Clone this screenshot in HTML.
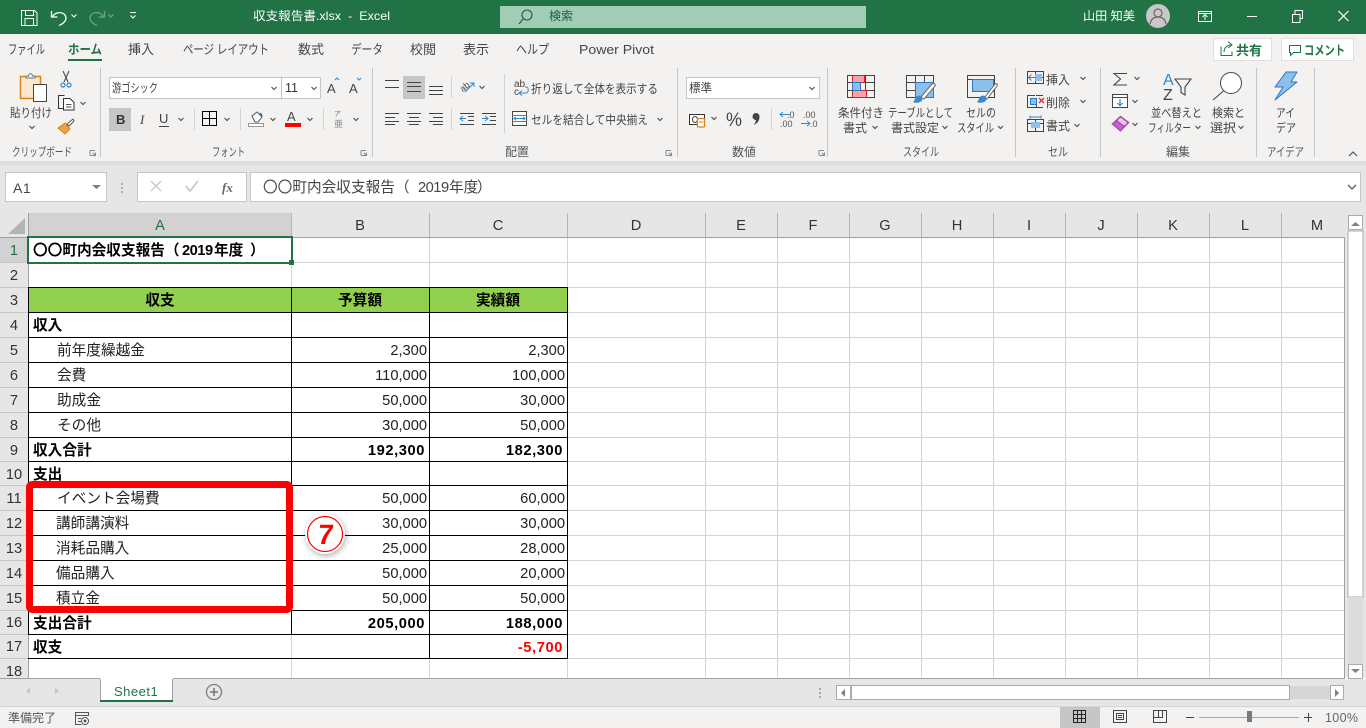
<!DOCTYPE html>
<html lang="ja"><head><meta charset="utf-8"><title>収支報告書.xlsx - Excel</title>
<style>
html,body{margin:0;padding:0;width:1366px;height:728px;overflow:hidden;background:#fff}
svg{display:block;position:absolute;left:0;top:0}
text{font-family:"Liberation Sans","Noto Sans CJK JP",sans-serif;white-space:pre;text-spacing-trim:space-all}
.w{font-size:12px;fill:#fff}
.r{font-size:12px;fill:#444}
.g{font-size:12px;fill:#555}
.c{font-size:14.67px;fill:#222}
.b{font-size:14.67px;font-weight:700;fill:#000}
.n{font-size:14.67px;fill:#222;text-anchor:end}
.nb{font-size:14.67px;font-weight:700;fill:#000;text-anchor:end;letter-spacing:.6px}
.h{font-size:14.67px;fill:#333;text-anchor:middle}
.ch{fill:none;stroke:#555;stroke-width:1.2}
.ln{fill:none;stroke:#444;stroke-width:1}
.crisp{shape-rendering:crispEdges}
</style></head><body>
<svg width="1366" height="728" viewBox="0 0 1366 728" xmlns="http://www.w3.org/2000/svg">
<!-- backgrounds -->
<g class="crisp">
<rect width="1366" height="728" fill="#fff"/>
<rect width="1366" height="34" fill="#217346"/>
<rect x="500" y="6" width="366" height="22" fill="#a0cdb4"/>
<rect y="34" width="1366" height="127" fill="#f3f2f1"/>
<rect y="161" width="1366" height="52" fill="#e6e6e6"/>
<rect y="161" width="1366" height="4" fill="#dcdcdc"/>
<rect x="5.5" y="172.5" width="101" height="29" fill="#fff" stroke="#c6c6c6"/>
<rect x="137.5" y="172.5" width="109" height="29" fill="#fff" stroke="#c6c6c6"/>
<rect x="250.5" y="172.5" width="1110" height="29" fill="#fff" stroke="#c6c6c6"/>
<!-- headers -->
<rect y="213" width="1344" height="24" fill="#e6e6e6"/>
<rect y="237" width="28" height="441" fill="#e6e6e6"/>
<rect x="29" y="213" width="262" height="24" fill="#d2d2d2"/>
<rect y="238" width="28" height="24" fill="#d2d2d2"/>
<rect x="1344" y="213" width="22" height="465" fill="#e6e6e6"/>
<!-- green header row -->
<rect x="28" y="287" width="539" height="25" fill="#92d050"/>
<!-- gridlines -->
<path fill="none" stroke="#d4d4d4" d="M291.5 237V287M429.5 237V287M567.5 237V678M705.5 237V678M777.5 237V678M849.5 237V678M921.5 237V678M993.5 237V678M1065.5 237V678M1137.5 237V678M1209.5 237V678M1281.5 237V678M291.5 634V678M429.5 658V678
M28 262.5H1344M28 287.5H1344M567 312.5H1344M567 337.5H1344M567 362.5H1344M567 387.5H1344M567 412.5H1344M567 437.5H1344M567 461.5H1344M567 485.5H1344M567 510.5H1344M567 535.5H1344M567 560.5H1344M567 585.5H1344M567 610.5H1344M567 634.5H1344M28 658.5H1344"/>
<!-- header separators -->
<path fill="none" stroke="#b4b4b4" d="M291.5 213V237M429.5 213V237M567.5 213V237M705.5 213V237M777.5 213V237M849.5 213V237M921.5 213V237M993.5 213V237M1065.5 213V237M1137.5 213V237M1209.5 213V237M1281.5 213V237"/>
<path fill="none" stroke="#c6c6c6" d="M0 262.5H28M0 287.5H28M0 312.5H28M0 337.5H28M0 362.5H28M0 387.5H28M0 412.5H28M0 437.5H28M0 461.5H28M0 485.5H28M0 510.5H28M0 535.5H28M0 560.5H28M0 585.5H28M0 610.5H28M0 634.5H28M0 658.5H28"/>
<path fill="none" stroke="#a0a0a0" d="M0 237.5H1344M28.5 213V678M1344.5 237V678"/>
<rect y="678" width="1345" height="1" fill="#a0a0a0"/>
<!-- table borders -->
<path fill="none" stroke="#000" d="M28.5 287V634M291.5 287V634M429.5 287V658M567.5 287V658
M28 287.5H568M28 312.5H568M28 337.5H568M28 362.5H568M28 387.5H568M28 412.5H568M28 437.5H568M28 461.5H568M28 485.5H568M28 510.5H568M28 535.5H568M28 560.5H568M28 585.5H568M28 610.5H568M28 634.5H568M28 658.5H568"/>
<path fill="none" stroke="#d4d4d4" d="M291.5 635V658"/>
<!-- selection -->
<rect x="28" y="237" width="264" height="26" fill="none" stroke="#217346" stroke-width="2"/>
<rect x="289" y="260" width="5" height="5" fill="#217346"/>
<!-- bottom bars -->
<rect y="679" width="1366" height="28" fill="#e6e6e6"/>
<rect y="706" width="1366" height="1" fill="#d4d4d4"/>
<rect y="707" width="1366" height="21" fill="#f3f2f1"/>
<path fill="#fff" d="M100 678h73v24h-73z"/>
<path fill="none" stroke="#a0a0a0" d="M100.5 679V702M172.5 679V702"/>
<rect x="100" y="700" width="73" height="2" fill="#217346"/>
<!-- scrollbars -->
<rect x="1348" y="231" width="15" height="366" fill="#fff" stroke="#ababab"/>
<rect x="1348" y="597" width="15" height="67" fill="#dcdcdc"/>
<rect x="1348.5" y="215.5" width="14" height="14" fill="#fff" stroke="#ababab"/>
<rect x="1348.5" y="664.5" width="14" height="14" fill="#fff" stroke="#ababab"/>
<rect x="836.5" y="685.5" width="14" height="14" fill="#fff" stroke="#ababab"/>
<rect x="851.5" y="685.5" width="438" height="14" fill="#fff" stroke="#ababab"/>
<rect x="1290" y="686" width="40" height="13" fill="#d6d6d6"/>
<rect x="1330.5" y="685.5" width="13" height="14" fill="#fff" stroke="#ababab"/>
<rect x="819" y="688" width="2" height="2" fill="#a8a8a8"/><rect x="819" y="692" width="2" height="2" fill="#a8a8a8"/><rect x="819" y="696" width="2" height="2" fill="#a8a8a8"/>
<rect x="121" y="183" width="2" height="2" fill="#b0b0b0"/><rect x="121" y="187" width="2" height="2" fill="#b0b0b0"/><rect x="121" y="191" width="2" height="2" fill="#b0b0b0"/>
<!-- status view -->
<rect x="1060" y="707" width="40" height="21" fill="#c6c6c6"/>
<path fill="none" stroke="#222" d="M1073.5 710.5h12v12h-12zM1077.5 710.5v12M1081.5 710.5v12M1073.5 714.5h12M1073.5 718.5h12"/>
<path fill="none" stroke="#444" d="M1113.5 710.5h13v12h-13zM1116.5 713.5h7v6h-7zM1118 715.5h4M1118 717.5h4"/>
<path fill="none" stroke="#444" d="M1153.5 710.5h13v12h-13zM1153.5 717.5h9v-7M1158.5 710.5v7"/>
<path fill="none" stroke="#444" d="M1186 717.5h8M1304 717.5h8M1308.5 713v9"/>
<rect x="1199" y="717" width="100" height="1" fill="#a8a8a8"/>
<rect x="1247" y="711" width="5" height="11" fill="#7a7a7a"/>
<!-- ribbon separators -->
<path fill="none" stroke="#c6c6c6" d="M100.5 68V157M372.5 68V157M677.5 68V157M827.5 68V157M1015.5 68V157M1100.5 68V157M1256.5 68V157M1314.5 68V157"/>
<path fill="none" stroke="#d2d2d2" d="M194.5 108V130M240.5 108V130M323.5 108V130M451.5 76V98M451.5 108V130M504.5 74V133M771.5 108V130"/>
<!-- input boxes -->
<rect x="109.5" y="77.5" width="172" height="21" fill="#fff" stroke="#c6c6c6"/>
<rect x="281.5" y="77.5" width="39" height="21" fill="#fff" stroke="#c6c6c6"/>
<rect x="686.5" y="77.5" width="133" height="21" fill="#fff" stroke="#c6c6c6"/>
<rect x="109" y="108" width="22" height="23" fill="#c6c6c6"/>
<rect x="403" y="76" width="22" height="23" fill="#c6c6c6"/>
<!-- buttons -->
<rect x="1213.5" y="38.5" width="58" height="22" fill="#fff" stroke="#e1dfdd"/>
<rect x="1281.5" y="38.5" width="72" height="22" fill="#fff" stroke="#e1dfdd"/>
<rect x="68" y="59" width="34" height="2" fill="#217346"/>
</g>
<!-- title bar text -->
<text x="253" y="20" class="w" textLength="137" lengthAdjust="spacingAndGlyphs">収支報告書.xlsx  -  Excel</text>
<text x="549" y="20" style="font-size:12px;fill:#1c5c3c">検索</text>
<text x="1083" y="20" class="w" textLength="52" lengthAdjust="spacingAndGlyphs">山田 知美</text>
<!-- tabs -->
<text x="8" y="54" class="r" style="font-size:13px" textLength="37" lengthAdjust="spacingAndGlyphs">ファイル</text>
<text x="68" y="54" class="r" style="font-weight:700;fill:#217346;font-size:13px" textLength="34" lengthAdjust="spacingAndGlyphs">ホーム</text>
<text x="128" y="54" class="r" style="font-size:13px" textLength="26" lengthAdjust="spacingAndGlyphs">挿入</text>
<text x="183" y="54" class="r" style="font-size:13px" textLength="86" lengthAdjust="spacingAndGlyphs">ページ レイアウト</text>
<text x="298" y="54" class="r" style="font-size:13px" textLength="26" lengthAdjust="spacingAndGlyphs">数式</text>
<text x="351" y="54" class="r" style="font-size:13px" textLength="32" lengthAdjust="spacingAndGlyphs">データ</text>
<text x="410" y="54" class="r" style="font-size:13px" textLength="26" lengthAdjust="spacingAndGlyphs">校閲</text>
<text x="463" y="54" class="r" style="font-size:13px" textLength="26" lengthAdjust="spacingAndGlyphs">表示</text>
<text x="516" y="54" class="r" style="font-size:13px" textLength="33" lengthAdjust="spacingAndGlyphs">ヘルプ</text>
<text x="579" y="54" class="r" style="font-size:13px" textLength="75" lengthAdjust="spacingAndGlyphs">Power Pivot</text>
<text x="1236" y="55" style="font-size:13px;font-weight:700;fill:#217346" textLength="26" lengthAdjust="spacingAndGlyphs">共有</text>
<text x="1304" y="55" style="font-size:13px;font-weight:700;fill:#217346" textLength="41" lengthAdjust="spacingAndGlyphs">コメント</text>
<!-- ribbon text -->
<text x="10" y="117" class="r" textLength="42" lengthAdjust="spacingAndGlyphs">貼り付け</text>
<text x="112" y="92" class="r" textLength="46" lengthAdjust="spacingAndGlyphs">游ゴシック</text>
<text x="285" y="92" style="font-size:12.5px;fill:#333">11</text>
<text x="327" y="93" style="font-size:13px;fill:#444">A</text>
<text x="349" y="93" style="font-size:13px;fill:#444">A</text>
<text x="116" y="124" style="font-size:13px;font-weight:700;fill:#333">B</text>
<text x="140" y="124" style="font-size:13px;font-style:italic;fill:#444;font-family:'Liberation Serif',serif">I</text>
<text x="159" y="123" style="font-size:13px;fill:#444">U</text>
<text x="287" y="121" style="font-size:13px;fill:#444">A</text>
<text x="334" y="116" style="font-size:7px;fill:#777">ア</text>
<text x="334" y="127" style="font-size:9px;fill:#888">亜</text>
<text x="531" y="93" class="r" textLength="127" lengthAdjust="spacingAndGlyphs">折り返して全体を表示する</text>
<text x="514" y="87" style="font-size:10px;fill:#444">ab</text>
<text x="514" y="95" style="font-size:10px;fill:#444">c</text>
<text x="531" y="124" class="r" textLength="117" lengthAdjust="spacingAndGlyphs">セルを結合して中央揃え</text>
<text x="689" y="92" class="r" textLength="23" lengthAdjust="spacingAndGlyphs">標準</text>
<text x="726" y="126" style="font-size:19px;fill:#444" textLength="16" lengthAdjust="spacingAndGlyphs">%</text>
<text x="787" y="118" style="font-size:9px;fill:#555">.0</text>
<text x="780" y="127" style="font-size:9px;fill:#555">.00</text>
<text x="803" y="118" style="font-size:9px;fill:#555">.00</text>
<text x="810" y="127" style="font-size:9px;fill:#555">.0</text>
<text x="838" y="117" class="r" textLength="46" lengthAdjust="spacingAndGlyphs">条件付き</text>
<text x="843" y="132" class="r" textLength="24" lengthAdjust="spacingAndGlyphs">書式</text>
<text x="888" y="117" class="r" textLength="65" lengthAdjust="spacingAndGlyphs">テーブルとして</text>
<text x="891" y="132" class="r" textLength="48" lengthAdjust="spacingAndGlyphs">書式設定</text>
<text x="966" y="117" class="r" textLength="30" lengthAdjust="spacingAndGlyphs">セルの</text>
<text x="957" y="132" class="r" textLength="37" lengthAdjust="spacingAndGlyphs">スタイル</text>
<text x="1046" y="84" class="r" textLength="24" lengthAdjust="spacingAndGlyphs">挿入</text>
<text x="1046" y="107" class="r" textLength="24" lengthAdjust="spacingAndGlyphs">削除</text>
<text x="1046" y="130" class="r" textLength="24" lengthAdjust="spacingAndGlyphs">書式</text>
<text x="1163" y="85" style="font-size:16px;fill:#2a8ad4">A</text>
<text x="1163" y="100" style="font-size:16px;fill:#444">Z</text>
<text x="1151" y="117" class="r" textLength="51" lengthAdjust="spacingAndGlyphs">並べ替えと</text>
<text x="1148" y="132" class="r" textLength="43" lengthAdjust="spacingAndGlyphs">フィルター</text>
<text x="1212" y="117" class="r" textLength="33" lengthAdjust="spacingAndGlyphs">検索と</text>
<text x="1210" y="132" class="r" textLength="26" lengthAdjust="spacingAndGlyphs">選択</text>
<text x="1276" y="117" class="r" textLength="19" lengthAdjust="spacingAndGlyphs">アイ</text>
<text x="1276" y="132" class="r" textLength="20" lengthAdjust="spacingAndGlyphs">デア</text>
<!-- group labels -->
<text x="12" y="156" class="g" textLength="60" lengthAdjust="spacingAndGlyphs">クリップボード</text>
<text x="212" y="156" class="g" textLength="33" lengthAdjust="spacingAndGlyphs">フォント</text>
<text x="505" y="156" class="g" textLength="24" lengthAdjust="spacingAndGlyphs">配置</text>
<text x="732" y="156" class="g" textLength="24" lengthAdjust="spacingAndGlyphs">数値</text>
<text x="903" y="156" class="g" textLength="36" lengthAdjust="spacingAndGlyphs">スタイル</text>
<text x="1048" y="156" class="g" textLength="20" lengthAdjust="spacingAndGlyphs">セル</text>
<text x="1166" y="156" class="g" textLength="24" lengthAdjust="spacingAndGlyphs">編集</text>
<text x="1267" y="156" class="g" textLength="37" lengthAdjust="spacingAndGlyphs">アイデア</text>
<!-- formula bar -->
<text x="13" y="193" style="font-size:14px;fill:#444;letter-spacing:.5px">A1</text>
<text x="222" y="192" style="font-size:13px;font-style:italic;font-weight:700;fill:#666;font-family:'Liberation Serif',serif">fx</text>
<text y="192" style="font-size:14.67px;fill:#444"><tspan x="263">〇〇町内会収支報告（</tspan><tspan x="418" style="letter-spacing:-.5px">2019</tspan><tspan x="449">年度</tspan><tspan x="477">）</tspan></text>
<!-- column headers -->
<text x="160" y="230" class="h" style="fill:#217346">A</text>
<text x="360" y="230" class="h">B</text><text x="498" y="230" class="h">C</text><text x="636" y="230" class="h">D</text>
<text x="741" y="230" class="h">E</text><text x="813" y="230" class="h">F</text><text x="885" y="230" class="h">G</text>
<text x="957" y="230" class="h">H</text><text x="1029" y="230" class="h">I</text><text x="1101" y="230" class="h">J</text>
<text x="1173" y="230" class="h">K</text><text x="1245" y="230" class="h">L</text><text x="1317" y="230" class="h">M</text>
<!-- row headers -->
<text x="14" y="255" class="h" style="fill:#217346">1</text>
<text x="14" y="280" class="h">2</text><text x="14" y="305" class="h">3</text><text x="14" y="330" class="h">4</text>
<text x="14" y="355" class="h">5</text><text x="14" y="380" class="h">6</text><text x="14" y="405" class="h">7</text>
<text x="14" y="430" class="h">8</text><text x="14" y="455" class="h">9</text><text x="14" y="479" class="h">10</text>
<text x="14" y="503" class="h">11</text><text x="14" y="528" class="h">12</text><text x="14" y="553" class="h">13</text>
<text x="14" y="578" class="h">14</text><text x="14" y="603" class="h">15</text><text x="14" y="627" class="h">16</text>
<text x="14" y="651" class="h">17</text><text x="14" y="676" class="h">18</text>
<!-- cells -->
<text y="255" class="b"><tspan x="33">〇〇町内会収支報告（</tspan><tspan x="182" style="letter-spacing:-.5px">2019</tspan><tspan x="214">年度</tspan><tspan x="250">）</tspan></text>
<text x="160" y="305" class="b" text-anchor="middle">収支</text>
<text x="360" y="305" class="b" text-anchor="middle">予算額</text>
<text x="498" y="305" class="b" text-anchor="middle">実績額</text>
<text x="33" y="330" class="b">収入</text>
<text x="57" y="355" class="c">前年度繰越金</text><text x="427" y="355" class="n">2,300</text><text x="565" y="355" class="n">2,300</text>
<text x="57" y="380" class="c">会費</text><text x="427" y="380" class="n">110,000</text><text x="565" y="380" class="n">100,000</text>
<text x="57" y="405" class="c">助成金</text><text x="427" y="405" class="n">50,000</text><text x="565" y="405" class="n">30,000</text>
<text x="57" y="430" class="c">その他</text><text x="427" y="430" class="n">30,000</text><text x="565" y="430" class="n">50,000</text>
<text x="33" y="455" class="b">収入合計</text><text x="425" y="455" class="nb">192,300</text><text x="563" y="455" class="nb">182,300</text>
<text x="33" y="479" class="b">支出</text>
<text x="57" y="503" class="c">イベント会場費</text><text x="427" y="503" class="n">50,000</text><text x="565" y="503" class="n">60,000</text>
<text x="56" y="528" class="c">講師講演料</text><text x="427" y="528" class="n">30,000</text><text x="565" y="528" class="n">30,000</text>
<text x="56" y="553" class="c">消耗品購入</text><text x="427" y="553" class="n">25,000</text><text x="565" y="553" class="n">28,000</text>
<text x="56" y="578" class="c">備品購入</text><text x="427" y="578" class="n">50,000</text><text x="565" y="578" class="n">20,000</text>
<text x="56" y="603" class="c">積立金</text><text x="427" y="603" class="n">50,000</text><text x="565" y="603" class="n">50,000</text>
<text x="33" y="628" class="b">支出合計</text><text x="425" y="628" class="nb">205,000</text><text x="563" y="628" class="nb">188,000</text>
<text x="33" y="652" class="b">収支</text><text x="563" y="652" class="nb" style="fill:#f00">-5,700</text>
<!-- bottom text -->
<text x="114" y="696" style="font-size:13px;fill:#217346;letter-spacing:.5px">Sheet1</text>
<text x="8" y="722" style="font-size:12px;fill:#555" textLength="48" lengthAdjust="spacingAndGlyphs">準備完了</text>
<text x="1325" y="722" style="font-size:12.5px;fill:#666" textLength="33">100%</text>
<!-- red annotation -->
<rect x="29.5" y="484.5" width="260" height="125" rx="3" fill="none" stroke="#f00" stroke-width="7"/>
<circle cx="325" cy="534" r="20" fill="#fff" style="filter:drop-shadow(1px 2px 3px rgba(0,0,0,.3))"/>
<circle cx="325" cy="534" r="17.5" fill="#fff" stroke="#f00" stroke-width="1.2"/>
<text x="325" y="544" text-anchor="middle" style="font-size:28px;font-weight:700;fill:#f00" transform="translate(57 0) skewX(-6)">7</text>
<!-- title bar icons -->
<g fill="none" stroke="#fff" stroke-width="1">
<path d="M21.5 10.5h13l2.5 2.5v12.5h-15.5z M25.5 10.5v5h8v-5 M25 25.5v-7h8.5v7"/>
<path stroke-width="1.3" d="M51.5 11v6h6M52 17c4-6 13-6 14 1 0 3-3 6-7 7.5"/>
<path d="M71.5 14.5l2.5 2.5 2.5-2.5M130 12.5h6M130.5 15.5l2.5 2.5 2.5-2.5"/>
<path stroke="#6aa585" stroke-width="1.3" d="M104.5 11v6h-6M104 17c-4-6-13-6-14 1 0 3 3 6 7 7.5M108.5 14.5l2.5 2.5 2.5-2.5"/>
<path d="M1198.5 11.5h13v10h-13zM1198.5 13.5h13M1205 20v-5M1202.5 17l2.5-2.5 2.5 2.5"/>
<path d="M1247 16.5h10M1292.5 14.5h7.5v8h-7.5zM1295 14v-3.5h7.5v8h-2.5"/>
<path stroke-width="1.2" d="M1338.5 11l10 10M1348.5 11l-10 10"/>
</g>
<circle cx="1158" cy="16" r="12" fill="#c8c8c8"/>
<g fill="none" stroke="#666" stroke-width="1.2"><circle cx="1158" cy="13" r="4"/><path d="M1150 24c1-5 4-7 8-7s7 2 8 7"/></g>
<g fill="none" stroke="#1c5c3c" stroke-width="1.1"><circle cx="527" cy="15" r="5"/><path d="M523 19l-4 5"/></g>
<!-- share and comment icons -->
<g fill="none" stroke="#217346" stroke-width="1"><path d="M1221 46.5v9h11v-4M1224 52c0-4 3-7 7-7M1228 41.5l4 3.5-4 3"/></g>
<path d="M1289.5 45.5h11v7h-7l-3 3v-3h-1z" fill="none" stroke="#217346"/>
<!-- clipboard group -->
<rect x="20.5" y="76.5" width="20" height="22" fill="#fbe7cc" stroke="#d9811e" stroke-width="1.5"/>
<path d="M26 78v-2h2.5c0-3 4-3 4 0h2.5v2z" fill="#f3f2f1" stroke="#777"/>
<rect x="33.5" y="84.5" width="13" height="17" fill="#fff" stroke="#444"/>
<g fill="none" stroke="#444" stroke-width="1"><path d="M63 71l5 11M69 71l-5 11"/></g>
<g fill="none" stroke="#2a8ad4" stroke-width="1.2"><circle cx="63" cy="85" r="2"/><circle cx="69" cy="85" r="2"/></g>
<path d="M63 108.5h-4.5v-13h6" fill="none" stroke="#333"/>
<path d="M63.5 98.5h6.5l4 4v7.5h-10.5z" fill="#fff" stroke="#333"/>
<path d="M66 104.5h5.5M66 107h5.5" fill="none" stroke="#555"/>
<path d="M58 128l7-5 5 6-5 5z" fill="#f0a040" stroke="#d9811e"/>
<path d="M67 124l6-5 1 2-5 5z" fill="#fff" stroke="#555"/>
<!-- chevrons -->
<g class="ch">
<path d="M29.5 126l2.5 2.5 2.5-2.5M80.5 102l2.5 2.5 2.5-2.5M271.5 87l2.5 2.5 2.5-2.5M311.5 87l2.5 2.5 2.5-2.5"/>
<path d="M178.5 118l2.5 2.5 2.5-2.5M224.5 118l2.5 2.5 2.5-2.5M270.5 118l2.5 2.5 2.5-2.5M307.5 118l2.5 2.5 2.5-2.5M353.5 118l2.5 2.5 2.5-2.5"/>
<path d="M479.5 86l2.5 2.5 2.5-2.5M657.5 118l2.5 2.5 2.5-2.5M809.5 87l2.5 2.5 2.5-2.5M711.5 117l2.5 2.5 2.5-2.5"/>
<path d="M872.5 126l2.5 2.5 2.5-2.5M942.5 126l2.5 2.5 2.5-2.5M998 126l2.5 2.5 2.5-2.5"/>
<path d="M1080.5 77l2.5 2.5 2.5-2.5M1080.5 100l2.5 2.5 2.5-2.5M1074.5 124l2.5 2.5 2.5-2.5"/>
<path d="M1134.5 77l2.5 2.5 2.5-2.5M1132.5 100l2.5 2.5 2.5-2.5M1132.5 123l2.5 2.5 2.5-2.5"/>
<path d="M1195.5 126l2.5 2.5 2.5-2.5M1238.5 126l2.5 2.5 2.5-2.5M1349 156l4-4 4 4"/>
<path stroke="#777" stroke-width="1.6" d="M1348 185l4 4 4-4"/>
</g>
<!-- font group icons -->
<path d="M335 80l2-2 2 2" fill="none" stroke="#2a8ad4"/>
<path d="M357 78l2 2 2-2" fill="none" stroke="#2a8ad4"/>
<path d="M159 126.5h10" stroke="#444" fill="none"/>
<path class="crisp" d="M202.5 111.5h14v14h-14zM209.5 111.5v14M202.5 118.5h14" fill="none" stroke="#000"/>
<path d="M252 116l5-4 5 5-4 5h-3z" fill="#fff" stroke="#555"/>
<path d="M260 113l2 3" stroke="#2a7ad4" stroke-width="2" fill="none"/>
<rect x="248.5" y="123.5" width="15" height="3" fill="#fff" stroke="#999"/>
<rect x="285" y="123" width="16" height="4" fill="#f00"/>
<!-- alignment icons -->
<path class="crisp" fill="none" stroke="#444" d="M385 80.5h14M385 87.5h14M407 82.5h14M407 86.5h14M407 91.5h14M429 86.5h14M429 90.5h14M429 94.5h14
M385 113.5h14M385 117.5h10M385 121.5h14M385 124.5h10M407 113.5h14M409 117.5h10M407 121.5h14M409 124.5h10M429 113.5h14M433 117.5h10M429 121.5h14M433 124.5h10
M460 124.5h14M468 116.5h6M468 120.5h6M460 113.5h14M482 124.5h14M490 116.5h6M490 120.5h6M482 113.5h14"/>
<path fill="none" stroke="#2a8ad4" d="M466 118.5h-6M463 116l-3 2.5 3 2.5M482 118.5h6M485 116l3 2.5-3 2.5"/>
<text x="459" y="90" style="font-size:9px;fill:#444" transform="rotate(-40 464 86)">ab</text>
<path d="M465 92l9-9M470 83h4v4" fill="none" stroke="#2a8ad4"/>
<path d="M520 93h6c3 0 3-6 0-6h-1M522 90.5l-3 2.5 3 2.5" fill="none" stroke="#2a8ad4"/>
<rect x="512.5" y="111.5" width="14" height="14" fill="#fff" stroke="#444"/>
<path d="M512 115.5h15M512 121.5h15" stroke="#2a8ad4" fill="none"/>
<path d="M514.5 118.5h10M516 116.8l-2 1.7 2 1.7M523 116.8l2 1.7-2 1.7" fill="none" stroke="#2a8ad4"/>
<!-- number group -->
<rect x="689.5" y="114.5" width="15" height="10" fill="#fff" stroke="#333"/>
<ellipse cx="695" cy="119.5" rx="2.5" ry="3" fill="none" stroke="#444"/>
<rect x="697.5" y="118.5" width="7" height="8.5" rx="1" fill="#fff" stroke="#d9811e" stroke-width="1.3"/>
<path d="M699 122h4" stroke="#d9811e" fill="none"/>
<circle cx="756" cy="116.5" r="3.5" fill="#444"/>
<path d="M759.5 116.5c0 4-2 7-6 8.5 2-2 2.5-4 2.5-6z" fill="#444"/>
<path d="M790 114.5h-10M783 112l-3 2.5 3 2.5M801 123.5h9M807 121l3 2.5-3 2.5" fill="none" stroke="#2a8ad4"/>
<!-- style icons -->
<g fill="none" stroke="#444">
<path class="crisp" d="M847.5 75.5h27v22h-27zM847.5 82.5h27M847.5 90.5h27M856.5 75.5v22M865.5 75.5v22"/>
</g>
<rect class="crisp" x="852.5" y="75.5" width="12" height="7" fill="#f9a0a8" stroke="#d81e28"/>
<rect class="crisp" x="852.5" y="90.5" width="14" height="7" fill="#f9a0a8" stroke="#d81e28"/>
<rect class="crisp" x="852.5" y="82.5" width="8" height="8" fill="#8cc0ea" stroke="#2a78c8"/>
<path class="crisp" d="M906.5 75.5h27v22h-27zM906.5 82.5h27M906.5 90.5h27M915.5 75.5v22M924.5 75.5v22" fill="none" stroke="#444"/>
<rect class="crisp" x="915.5" y="82.5" width="18" height="15" fill="#8cc0ea" stroke="#2a78c8"/>
<path d="M921 97l11-13c2-1 4 0 3 2l-11 13z" fill="#fff" stroke="#666"/>
<path d="M913 102c1-1 2-2 2-4 1-2 4-3 6-2 2 2 2 5-1 6-3 1-5 1-7 0z" fill="#3a8ad0"/>
<path class="crisp" d="M967.5 75.5h27v22h-27zM967.5 79.5h27" fill="none" stroke="#444"/>
<rect class="crisp" x="972.5" y="79.5" width="21" height="12" fill="#8cc0ea" stroke="#2a78c8"/>
<path d="M985 97l10-13c2-1 3 0 2 2l-10 13z" fill="#fff" stroke="#666"/>
<path d="M977 102c1-1 2-2 2-4 1-2 4-3 6-2 2 2 2 5-1 6-3 1-5 1-7 0z" fill="#3a8ad0"/>
<!-- cell icons -->
<path class="crisp" d="M1027.5 71.5h16v12h-16zM1027.5 77.5h16M1035.5 71.5v12" fill="none" stroke="#444"/>
<rect class="crisp" x="1035" y="74" width="7" height="7" fill="#8cc0ea"/>
<path d="M1036 77.5h-7M1031.5 74.5l-3 3 3 3" fill="#f3f2f1" stroke="#2a8ad4"/>
<path class="crisp" d="M1027 95.5h8M1036 95.5h7M1027 107.5h16M1027.5 95.5v12M1036.5 107v-4" fill="none" stroke="#444"/>
<rect class="crisp" x="1030.5" y="98.5" width="6" height="6" fill="#8cc0ea" stroke="#2a78c8"/>
<path d="M1039 98l5 5M1044 98l-5 5" stroke="#e03030" stroke-width="1.3" fill="none"/>
<path class="crisp" d="M1027.5 119.5h16v12h-16zM1027.5 123.5h16M1035.5 119.5v12" fill="none" stroke="#444"/>
<rect class="crisp" x="1031" y="122" width="9" height="6" fill="#8cc0ea"/>
<path d="M1030 117h11M1030 115.5v3M1041 115.5v3" stroke="#2a8ad4" fill="none"/>
<!-- editing icons -->
<path d="M1127 73.5h-13l6.5 5.5-6.5 6h13" fill="none" stroke="#444" stroke-width="1.1"/>
<rect class="crisp" x="1112.5" y="94.5" width="15" height="13" fill="#fff" stroke="#444"/>
<path class="crisp" d="M1112 97.5h16" stroke="#444" fill="none"/>
<path d="M1120 99v6M1117.5 103l2.5 2.5 2.5-2.5" fill="none" stroke="#2a8ad4" stroke-width="1.2"/>
<path d="M1112.5 124l8-7.5 8 6-8 8z" fill="#e7c4ea" stroke="#a040a8" stroke-width="1.4"/>
<path d="M1112.5 124l4-3.5 8 6-4 4.5z" fill="#c060c8" stroke="#a040a8"/>
<path d="M1175 79h16l-6 8v8l-4-2.5v-5.5z" fill="none" stroke="#444" stroke-width="1.1"/>
<circle cx="1231" cy="83" r="10.5" fill="#fff" stroke="#444" stroke-width="1"/>
<path d="M1223.5 91l-10.500 9" stroke="#444" fill="none"/>
<path d="M1286 72h11l-6 10h6l-22 18 8-13h-8z" fill="#8cc0ea" stroke="#2a78c8" stroke-linejoin="round"/>
<!-- dialog launchers -->
<g fill="none" stroke="#888">
<path class="crisp" d="M90 150.5h5M90 150.5v5M90.5 155.5h5v-3M93 153l2.5 2.5M361 150.5h5M361 150.5v5M361.5 155.5h5v-3M364 153l2.5 2.5M666 150.5h5M666 150.5v5M666.5 155.5h5v-3M669 153l2.5 2.5M819 150.5h5M819 150.5v5M819.5 155.5h5v-3M822 153l2.5 2.5"/>
</g>
<!-- formula icons -->
<path d="M151 181l10 10M161 181l-10 10" stroke="#c8c8c8" stroke-width="1.4" fill="none"/>
<path d="M186 186l4 5 8-10" stroke="#c8c8c8" stroke-width="1.8" fill="none"/>
<path d="M92 185h9l-4.5 4z" fill="#808080"/>
<path d="M25 218v16H8z" fill="#b4b4b4"/>
<!-- scroll arrows -->
<path d="M1351 226h9l-4.5-4z" fill="#808080"/>
<path d="M1351 669h9l-4.5 4z" fill="#808080"/>
<path d="M845 689v8l-4-4z" fill="#808080"/>
<path d="M1335 689v8l4-4z" fill="#808080"/>
<path d="M30 688v6l-4-3zM55 688v6l4-3z" fill="#c4c4c4"/>
<!-- add sheet -->
<circle cx="214" cy="692" r="7.5" fill="none" stroke="#808080" stroke-width="1.3"/>
<path d="M214 688v8M210 692h8" stroke="#666" stroke-width="1.3" fill="none"/>
<!-- macro icon -->
<path class="crisp" d="M75.5 712.5h13v3h-13zM75.5 715.5v9h6M78 718.5h3M78 721.5h3" fill="none" stroke="#555"/>
<circle cx="85" cy="721" r="3.5" fill="#fff" stroke="#555"/><circle cx="85" cy="721" r="1.5" fill="#555"/>
</svg>
</body></html>
